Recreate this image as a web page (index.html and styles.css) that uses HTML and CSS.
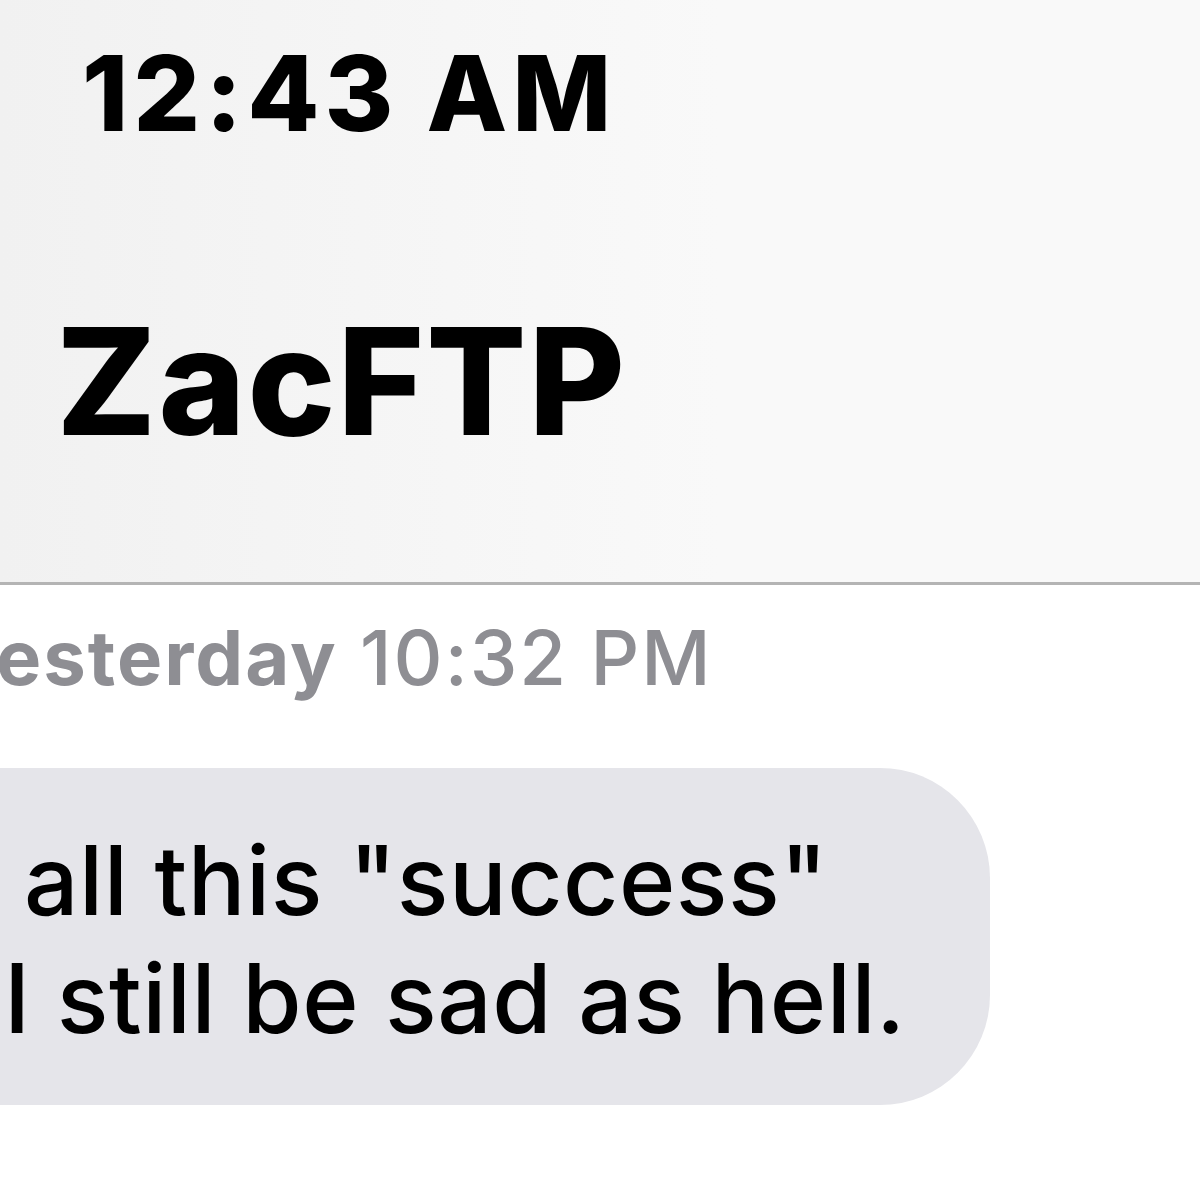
FILE: index.html
```html
<!DOCTYPE html>
<html lang="en">
<head>
  <meta charset="UTF-8">
  <title>ZacFTP</title>
  <link rel="stylesheet" href="styles.css">
</head>
<body>

<!-- Üst bar -->
<div class="header">
  <div class="time">12:43 AM</div>
  <div class="name">ZacFTP</div>
</div>

<!-- Mesajlar -->
<div class="thread">
  <div class="stamp"><b>esterday</b> 10:32 PM</div>
  <div class="bubble">all this "success"<br>I still be sad as hell.</div>
</div>

</body>
</html>
```

FILE: styles.css
```css
body {
  font-family: Inter, "Liberation Sans", Arial, sans-serif;
  background: #fff;
  margin: 0;
  padding: 0;
  width: 1200px;
  height: 1200px;
  overflow: hidden;
  color: #000;
}
.header {
  height: 585px;
  box-sizing: border-box;
  padding-top: 40px;
  background: linear-gradient(to right, #f1f1f1, #f9f9f9 60%, #f9f9f9);
  border-bottom: 3px solid #b4b4b4;
}
.time {
  font-size: 105px;
  font-weight: 800;
  line-height: 1;
  letter-spacing: 5px;
  margin-left: 82px;
}
.name {
  font-size: 148px;
  font-weight: 800;
  line-height: 1;
  letter-spacing: 2px;
  margin-top: 163px;
  margin-left: 56px;
}
.stamp {
  font-size: 76px;
  font-weight: 500;
  line-height: 1;
  letter-spacing: 2px;
  color: #8e8e93;
  margin-top: 34px;
  margin-left: -4px;
}
.stamp b { font-weight: 700; }
.bubble {
  width: 1110px;
  box-sizing: border-box;
  margin-top: 73px;
  margin-left: -120px;
  padding: 53px 0 48px 124px;
  background: #e5e5ea;
  border-radius: 110px;
  font-size: 96px;
  font-weight: 500;
  line-height: 118px;
  letter-spacing: 0.5px;
  text-indent: 20px;
}
```
